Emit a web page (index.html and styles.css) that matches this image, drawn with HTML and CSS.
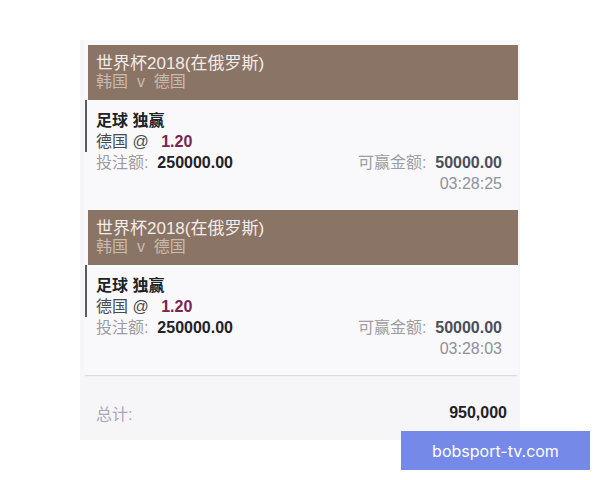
FILE: index.html
```html
<!DOCTYPE html>
<html lang="zh">
<head>
<meta charset="utf-8">
<link rel="stylesheet" href="styles.css">
</head>
<body>
<div class="panel">
  <div class="list">
    <div class="card">
      <div class="card-head">
        <div class="title">世界杯2018(在俄罗斯)</div>
        <div class="sub">韩国 &nbsp;v&nbsp; 德国</div>
      </div>
      <div class="card-body">
        <div class="sel">
          <div class="market">足球 独赢</div>
          <div class="pick">德国 @ <span class="odds">1.20</span></div>
        </div>
        <div class="stake">
          <span><span class="label">投注额:</span> &nbsp;<b>250000.00</b></span>
          <span><span class="label">可赢金额:</span> &nbsp;<b class="win">50000.00</b></span>
        </div>
        <div class="time">03:28:25</div>
      </div>
    </div>
    <div class="card">
      <div class="card-head">
        <div class="title">世界杯2018(在俄罗斯)</div>
        <div class="sub">韩国 &nbsp;v&nbsp; 德国</div>
      </div>
      <div class="card-body">
        <div class="sel">
          <div class="market">足球 独赢</div>
          <div class="pick">德国 @ <span class="odds">1.20</span></div>
        </div>
        <div class="stake">
          <span><span class="label">投注额:</span> &nbsp;<b>250000.00</b></span>
          <span><span class="label">可赢金额:</span> &nbsp;<b class="win">50000.00</b></span>
        </div>
        <div class="time">03:28:03</div>
      </div>
    </div>
  </div>
  <div class="total">
    <span class="label">总计:</span>
    <b>950,000</b>
  </div>
</div>
<div class="watermark">bobsport-tv.com</div>
</body>
</html>
```

FILE: styles.css
```css
html, body {
  margin: 0;
  padding: 0;
  background: #ffffff;
}
body {
  font-family: "Liberation Sans", "Noto Sans CJK SC", sans-serif;
  font-size: 16px;
  color: #2a2a2e;
  width: 600px;
  height: 480px;
  position: relative;
  overflow: hidden;
}
.panel {
  margin: 40px 0 0 80px;
  width: 440px;
  height: 400px;
  background: #f6f6f9;
  display: flex;
  flex-direction: column;
}
.list {
  padding: 5px 0 0 1px;
  background: #f9f9fb;
  box-shadow: 0 2px 1px -1px #dcdce0;
  margin: 0 2px 0 4px;
}
.card-head {
  margin-left: 3px;
  margin-right: 0;
  height: 55px;
  box-sizing: border-box;
  padding: 10px 8px 0 8px;
  background: #8a7466;
  line-height: 18px;
}
.title {
  color: #f4ece8;
  font-size: 17px;
}
.sub {
  color: #cbbab0;
  font-size: 16px;
}
.card-body {
  padding: 0 16px 16px 0;
  line-height: 21px;
}
.sel {
  border-left: 2px solid #5c5c60;
  padding: 10px 0 0 9px;
}
.market {
  font-weight: bold;
  color: #222226;
}
.pick {
  color: #4a4a4e;
}
.odds {
  font-weight: bold;
  color: #7a2452;
  margin-left: 8px;
}
.stake {
  display: flex;
  justify-content: space-between;
  padding-left: 11px;
}
.label {
  color: #9c9ca2;
}
.stake b {
  color: #222226;
}
.stake b.win {
  color: #4a4f58;
}
.time {
  text-align: right;
  color: #8e9198;
}
.total {
  flex: 1;
  display: flex;
  justify-content: space-between;
  align-items: center;
  padding: 8px 13px 0 16px;
  margin-top: 2px;
}
.total .label {
  color: #a8a8ae;
}
.total b {
  color: #222226;
}
.watermark {
  position: absolute;
  left: 401px;
  top: 431px;
  width: 189px;
  height: 39px;
  background: #7489e8;
  color: #ffffff;
  font-family: Inter, "Liberation Sans", sans-serif;
  font-size: 16px;
  display: flex;
  align-items: center;
  justify-content: center;
}
```
